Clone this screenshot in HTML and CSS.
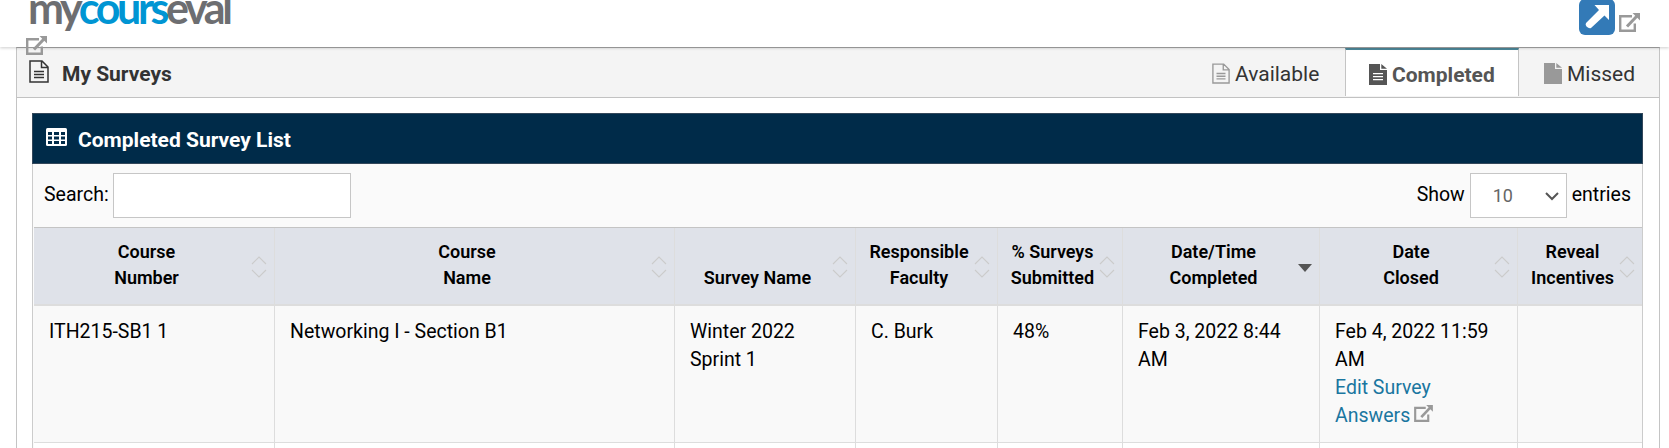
FILE: index.html
```
<!DOCTYPE html>
<html lang="en">
<head>
<meta charset="utf-8">
<title>My Surveys</title>
<link rel="stylesheet" href="styles.css">
</head>
<body>
<svg class="symbols" width="0" height="0">
  <symbol id="external" viewBox="0 0 21 19"><path d="M13 3.200H1.200V17.800H15.800V10.500" fill="none" stroke="currentColor" stroke-width="2.400"/><path d="M8 13.500L18 3" fill="none" stroke="currentColor" stroke-width="3"/><path d="M13.500 0H21V7.500Z" fill="currentColor"/></symbol>
  <symbol id="page-lines" viewBox="0 0 20 23"><path d="M1 1H13L19 7V22H1ZM12.5 1V7.5H19M5 11.5H15M5 14.5H15M5 17.5H15" fill="none" stroke="currentColor" stroke-width="1.5"/></symbol>
  <symbol id="page-solid-lines" viewBox="0 0 18 21"><path fill-rule="evenodd" d="M0 0H11V6H18V21H0ZM4 9H14V10.3H4ZM4 12H14V13.3H4ZM4 15H14V16.3H4ZM12.3 0L18 4.8H12.3Z" fill="currentColor"/></symbol>
  <symbol id="page-solid" viewBox="0 0 18 21"><path d="M0 0H11V6H18V21H0ZM12.3 0L18 4.8H12.3Z" fill="currentColor"/></symbol>
  <symbol id="sort" viewBox="0 0 16 22"><path d="M1 8L8 1L15 8M1 14L8 21L15 14" fill="none" stroke="currentColor" stroke-width="1.1"/></symbol>
</svg>
<header class="topbar">
  <svg class="logo" width="240" height="34" viewBox="0 0 240 34">
    <text class="logo-text" x="28" y="23.500" textLength="205" lengthAdjust="spacing"><tspan class="logo-gray">my</tspan><tspan class="logo-blue">cours</tspan><tspan class="logo-gray">eval</tspan></text>
  </svg>
  <svg class="ext logo-ext"><use href="#external"/></svg>
  <div class="top-actions">
    <svg class="launch" viewBox="0 0 36 36"><rect width="36" height="36" rx="6" fill="#337ab7"/><path d="M15.500 6H30V21L25.500 16.500L12 29Q10 30 7.500 27.500Q6 25.500 7 24L20 11Z" fill="#fff"/></svg>
    <svg class="ext"><use href="#external"/></svg>
  </div>
</header>
<main class="panel">
  <div class="panel-head">
    <svg class="title-icon"><use href="#page-lines"/></svg>
    <h1 class="panel-title">My Surveys</h1>
    <nav class="tabs">
      <a class="tab tab-available"><svg class="tab-icon"><use href="#page-lines"/></svg><span>Available</span></a>
      <a class="tab tab-active"><svg class="tab-icon"><use href="#page-solid-lines"/></svg><span>Completed</span></a>
      <a class="tab tab-missed"><svg class="tab-icon"><use href="#page-solid"/></svg><span>Missed</span></a>
    </nav>
  </div>
  <section class="card">
    <div class="card-head">
      <svg class="grid-icon" viewBox="0 0 21 18"><rect width="21" height="18" rx="1.500" fill="#fff"/><path d="M2 4h4v3H2zM8 4h5v3H8zM15 4h4v3h-4zM2 8.500h4v3H2zM8 8.500h5v3H8zM15 8.500h4v3h-4zM2 13h4v3H2zM8 13h5v3H8zM15 13h4v3h-4z" fill="#002b49"/></svg>
      <h2 class="card-title">Completed Survey List</h2>
    </div>
    <div class="controls">
      <label class="control" for="search">Search:</label>
      <input class="search" id="search" type="text">
      <span class="show">Show</span>
      <span class="select">10<svg class="chevron" viewBox="0 0 14 10"><path d="M1 2L7 8L13 2" fill="none" stroke="#555" stroke-width="2"/></svg></span>
      <span class="entries">entries</span>
    </div>
    <table class="grid">
      <colgroup><col class="c1"><col class="c2"><col class="c3"><col class="c4"><col class="c5"><col class="c6"><col class="c7"><col class="c8"></colgroup>
      <thead>
        <tr>
          <th>Course<br>Number<svg class="sort"><use href="#sort"/></svg></th>
          <th>Course<br>Name<svg class="sort"><use href="#sort"/></svg></th>
          <th>Survey Name<svg class="sort"><use href="#sort"/></svg></th>
          <th>Responsible<br>Faculty<svg class="sort"><use href="#sort"/></svg></th>
          <th>% Surveys<br>Submitted<svg class="sort"><use href="#sort"/></svg></th>
          <th>Date/Time<br>Completed<svg class="sorted" viewBox="0 0 14 8"><path d="M0 0H14L7 8Z" fill="#555"/></svg></th>
          <th>Date<br>Closed<svg class="sort"><use href="#sort"/></svg></th>
          <th>Reveal<br>Incentives<svg class="sort"><use href="#sort"/></svg></th>
        </tr>
      </thead>
      <tbody>
        <tr class="odd">
          <td>ITH215-SB1 1</td>
          <td>Networking I - Section B1</td>
          <td>Winter 2022<br>Sprint 1</td>
          <td>C. Burk</td>
          <td>48%</td>
          <td>Feb 3, 2022 8:44<br>AM</td>
          <td>Feb 4, 2022 11:59<br>AM<br><a class="link">Edit Survey<br>Answers</a><svg class="ext ext-inline"><use href="#external"/></svg></td>
          <td></td>
        </tr>
        <tr class="next"><td></td><td></td><td></td><td></td><td></td><td></td><td></td><td></td></tr>
      </tbody>
    </table>
  </section>
</main>
</body>
</html>
```
FILE: styles.css
```
* { box-sizing: border-box; }
body { margin: 0; height: 448px; overflow: hidden; background: #fff; font: 19.5px/28px Roboto, sans-serif; color: #000; }
svg { display: block; flex: none; }
.symbols { position: absolute; }
.topbar { position: relative; z-index: 2; height: 47px; display: flex; justify-content: space-between; background: #fff; box-shadow: 0 1px 3px rgba(0,0,0,.2); }
.logo-text { font: 700 43px Lato, sans-serif; }
.logo-gray { fill: #6d6e71; }
.logo-blue { fill: #0095d3; }
.ext { width: 21px; height: 19px; color: #999; }
.logo-ext { position: absolute; left: 26px; top: 36px; }
.top-actions { display: flex; padding-right: 29px; gap: 4px; margin-top: -1px; }
.launch { width: 36px; height: 36px; }
.top-actions .ext { margin-top: 14px; }
.panel { margin: 0 9px 0 16px; height: 401px; overflow: hidden; border: 1px solid #c4c4c4; border-top-color: #aaa; border-bottom: 0; }
.panel-head { height: 50px; display: flex; align-items: center; background: #f4f4f4; border-bottom: 1px solid #c2c2c2; color: #333; padding-left: 12px; }
.title-icon { width: 20px; height: 23px; margin-bottom: 2px; }
.panel-title { margin: 2px 0 0 13px; font-size: 21px; line-height: 28px; font-weight: 700; }
.tabs { display: flex; margin-left: auto; height: 48px; align-self: flex-start; }
.tab { display: flex; align-items: center; font-size: 21px; }
.tab span { padding-top: 3px; }
.tab-icon { width: 18px; height: 21px; color: #999; margin-top: 2px; }
.tab-available { width: 133px; gap: 5px; }
.tab-active { width: 174px; padding-left: 23px; gap: 5px; background: #fff; border: 1px solid #c4c4c4; border-top: 2px solid #4c8798; border-bottom: 0; font-weight: 700; color: #555; }
.tab-active .tab-icon { color: #555; }
.tab-missed { width: 140px; padding-left: 25px; gap: 5px; }
.card { margin: 15px 16px 0 15px; border: 1px solid #ccc; border-top: 0; border-bottom: 0; height: 335px; background: #fafafa; }
.card-head { height: 51px; margin: 0 -1px; display: flex; align-items: center; padding-left: 13px; gap: 11px; background: #002b49; border: 1px solid #33475a; color: #fff; }
.grid-icon { width: 21px; height: 18px; margin-bottom: 3px; }
.card-title { margin: 3px 0 0; font-size: 21px; line-height: 28px; font-weight: 700; }
.controls { height: 63px; padding: 9px 11px 0; display: flex; align-items: flex-start; line-height: 43px; }
.search { width: 238px; height: 45px; margin-left: 4px; border: 1px solid #c6c6c6; background: #fff; }
.show { margin-left: auto; }
.select { width: 97px; height: 45px; margin: 0 5px; padding: 0 7px 0 22px; display: flex; align-items: center; justify-content: space-between; border: 1px solid #c6c6c6; background: #fff; color: #666; font-size: 18px; }
.chevron { width: 14px; height: 10px; }
.grid { width: 1608px; margin-left: 1px; table-layout: fixed; border-collapse: separate; border-spacing: 0; border-top: 1px solid #c4c4c4; }
.c1 { width: 241px; }
.c2 { width: 400px; }
.c3 { width: 181px; }
.c4 { width: 142px; }
.c5 { width: 125px; }
.c6 { width: 197px; }
.c7 { width: 198px; }
.c8 { width: 124px; }
th { position: relative; height: 78px; padding: 0 27px 13px 12px; vertical-align: bottom; background: #dfe2e9; border-right: 1px solid #ddd; border-bottom: 2px solid #ddd; font-size: 18px; line-height: 26px; font-weight: 600; white-space: nowrap; }
.sort { position: absolute; right: 7px; top: 28px; width: 16px; height: 22px; color: #cbcbcb; }
.sorted { position: absolute; right: 7px; top: 36px; width: 14px; height: 8px; }
td { height: 137px; padding: 12px 0 0 15px; vertical-align: top; border-right: 1px solid #ddd; border-bottom: 1px solid #ddd; white-space: nowrap; background: #f9f9f9; }
th:last-child, td:last-child { border-right: 0; }
.next td { height: 60px; background: #fff; }
.link { color: #1a76a0; }
.ext-inline { display: inline-block; width: 19px; height: 17px; margin-left: 4px; }
```
